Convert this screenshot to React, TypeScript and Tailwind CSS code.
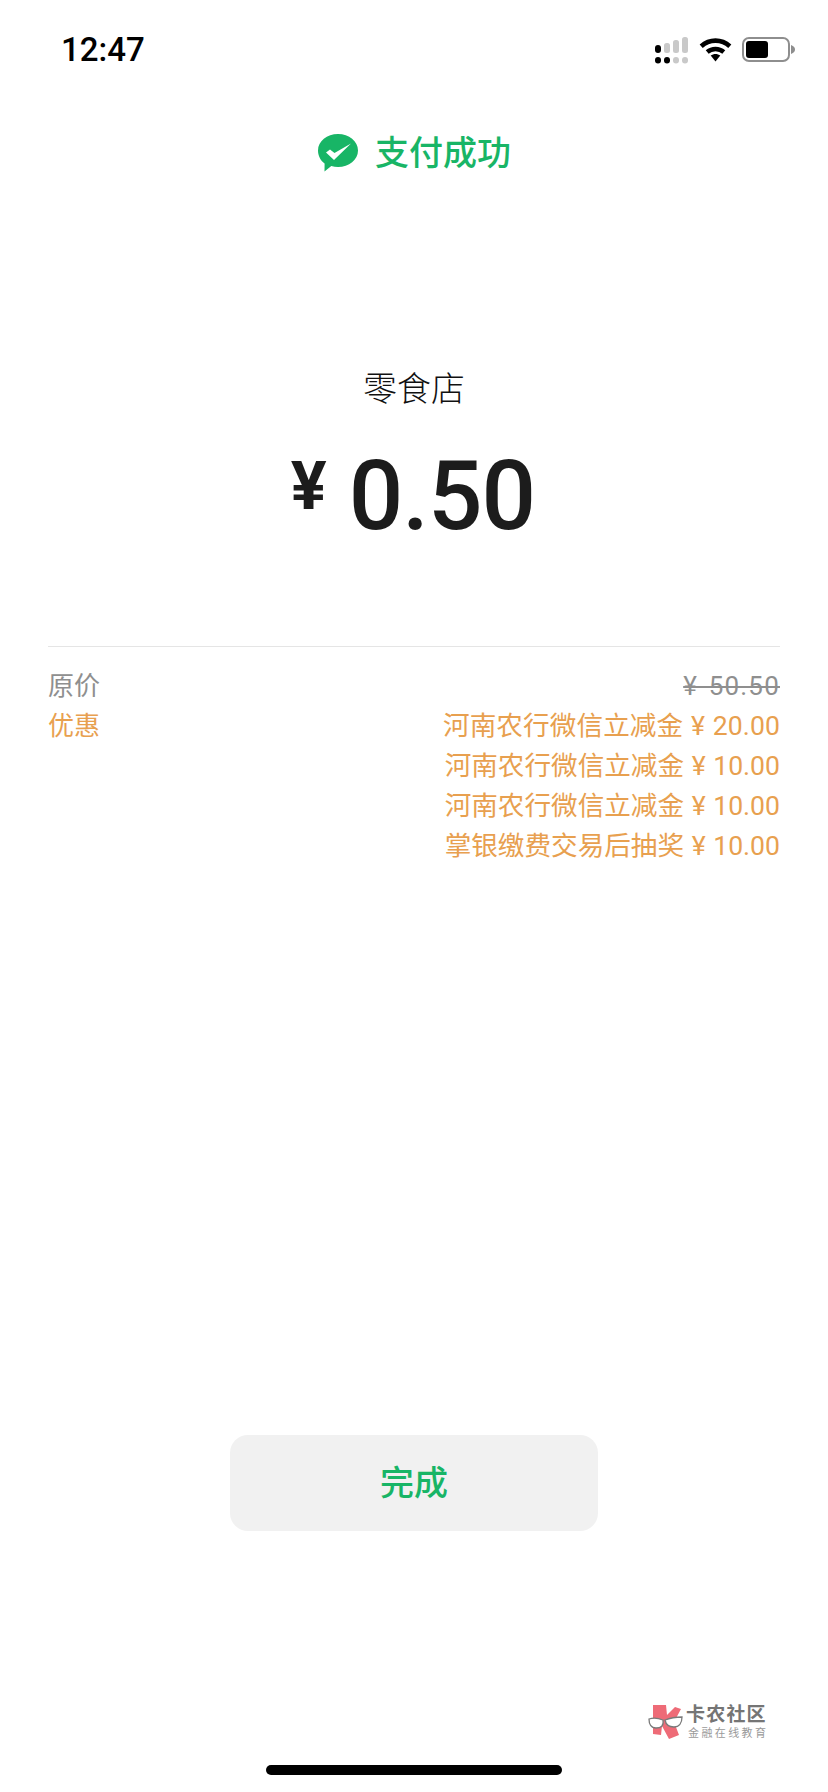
import React from "react";

const CJK = "font-['Roboto','Noto_Sans_CJK_SC',sans-serif]";

function Signal() {
  return (
    <svg width="34" height="27" viewBox="0 0 34 27">
      <rect x="0" y="8" width="6" height="8" rx="3" fill="#000" />
      <rect x="9" y="6" width="6" height="10" rx="2.500" fill="#c9c9c9" />
      <rect x="18" y="3" width="6" height="13" rx="2.500" fill="#c9c9c9" />
      <rect x="27" y="0" width="6" height="16" rx="2.500" fill="#c9c9c9" />
      <rect x="0" y="20" width="6" height="6.500" rx="3" fill="#000" />
      <rect x="9" y="20" width="6" height="6.500" rx="3" fill="#000" />
      <rect x="18" y="20" width="6" height="6.500" rx="3" fill="#c9c9c9" />
      <rect x="27" y="20" width="6" height="6.500" rx="3" fill="#c9c9c9" />
    </svg>
  );
}

function Wifi() {
  return (
    <svg width="33" height="25" viewBox="0 0 33 25" fill="none">
      <path d="M2.200 9.200C10.400 1.800 22.600 1.800 30.800 9.200" stroke="#000" strokeWidth="4.600" />
      <path d="M8.200 15C12.900 10.900 20.100 10.900 24.800 15" stroke="#000" strokeWidth="4.400" />
      <path d="M11.700 18.600C14.500 16.300 18.500 16.300 21.300 18.600L16.500 24.400Z" fill="#000" />
    </svg>
  );
}

function Battery() {
  return (
    <div className="flex items-center">
      <div className="flex h-[25px] w-[48px] items-center rounded-[7px] border-2 border-[#8e8e8e] p-[2px]">
        <div className="h-[17px] w-[22px] rounded-[3px] bg-black" />
      </div>
      <svg width="5" height="9" viewBox="0 0 5 9" className="ml-[1px]">
        <path d="M0 0C3 1 4 3 4 4.500S3 8 0 9Z" fill="#8e8e8e" />
      </svg>
    </div>
  );
}

function WeChatPayIcon() {
  return (
    <svg width="42" height="38" viewBox="0 0 42 38">
      <path
        d="M21 0C32 0 41 7.200 41 16.500S32 33 21 33c-2.400 0-4.600-.3-6.700-.9L7.500 37.400 7.600 29.500C3.400 26.400 1 21.700 1 16.500 1 7.200 10 0 21 0Z"
        fill="#18b566"
      />
      <path d="M9 18.500 13 15.500 17.500 19 34 9.500 17 26Z" fill="#fff" />
    </svg>
  );
}

function Watermark() {
  return (
    <div className="absolute left-[648px] top-[1704px] flex items-start">
      <svg width="36" height="37" viewBox="0 0 36 37">
        <path d="M5 1 18 1 19 11 27 3 33 5 26 18 31 31 21 35 14 22 13 31 5 30Z" fill="#ee6b77" />
        <path d="M1 15C4 14 10 14 15 16 16 22 13 24 8 24 3 24 1 20 1 15Z" fill="#fff" stroke="#7a7a7a" strokeWidth="1.300" />
        <path d="M17 16C22 14 29 13 34 13 34 19 31 23 26 23 21 23 18 21 17 16Z" fill="#fff" stroke="#7a7a7a" strokeWidth="1.300" />
      </svg>
      <div className="ml-[2px] flex flex-col">
        <span className={`${CJK} text-[19px] leading-[22px] font-bold tracking-[1.200px] whitespace-nowrap text-[#757575]`}>卡农社区</span>
        <span className={`${CJK} mt-[1px] ml-[2px] text-[11px] leading-[13px] tracking-[2.400px] whitespace-nowrap text-[#9a9a9a]`}>金融在线教育</span>
      </div>
    </div>
  );
}

function Row({ label, value, labelClass, valueClass }: { label?: string; value: string; labelClass?: string; valueClass: string }) {
  return (
    <div className="flex h-[40px] items-center justify-between">
      <span className={labelClass}>{label}</span>
      <span className={valueClass}>{value}</span>
    </div>
  );
}

export default function App() {
  const orange = "text-[26.600px] [word-spacing:1px] text-[#e8a04f]";
  return (
    <div className={`${CJK} relative flex h-[1792px] w-[828px] flex-col overflow-hidden bg-white`}>
      <div className="flex h-[100px] items-start justify-between pt-[35px] pr-[32px] pl-[61px]">
        <span className="font-['Roboto',sans-serif] text-[33px] leading-[30px] font-medium text-black">12:47</span>
        <div className="flex items-start gap-[10px] pt-[2px]">
          <Signal />
          <Wifi />
          <Battery />
        </div>
      </div>

      <div className="mt-[33px] flex items-center justify-center gap-[16px]">
        <WeChatPayIcon />
        <span className="text-[34px] leading-[40px] font-medium text-[#18b566]">支付成功</span>
      </div>

      <div className="mt-[194px] text-center text-[34px] leading-[44px] font-light text-[#111111]">零食店</div>

      <div className="mt-[30px] flex items-start justify-center pr-[2px] font-['Roboto',sans-serif] text-[#1c1c1c]">
        <span className="mt-[9px] mr-[22px] text-[67px] leading-[72px] font-bold">¥</span>
        <span className="text-[96px] leading-[110px] font-medium tracking-[-1px]">0.50</span>
      </div>

      <div className="mx-[48px] mt-[95px] border-t border-[#e5e5e5] pt-[19px] text-[26px]">
        <Row label="原价" value="¥ 50.50" labelClass="text-[#8f8f8f]" valueClass="text-[#8f8f8f] line-through tracking-[1.200px] [word-spacing:3px]" />
        <Row label="优惠" value="河南农行微信立减金 ¥ 20.00" labelClass="text-[#e8a04f]" valueClass={`${orange} tracking-[0.100px]`} />
        <Row value="河南农行微信立减金 ¥ 10.00" valueClass={orange} />
        <Row value="河南农行微信立减金 ¥ 10.00" valueClass={orange} />
        <Row value="掌银缴费交易后抽奖 ¥ 10.00" valueClass={orange} />
      </div>

      <button className="mx-auto mt-[569px] flex h-[96px] w-[368px] items-center justify-center rounded-[18px] bg-[#f1f1f1] text-[34px] font-medium text-[#18b566]">
        完成
      </button>

      <div className="mx-auto mt-auto mb-[17px] h-[10px] w-[296px] rounded-full bg-black" />
      <Watermark />
    </div>
  );
}
